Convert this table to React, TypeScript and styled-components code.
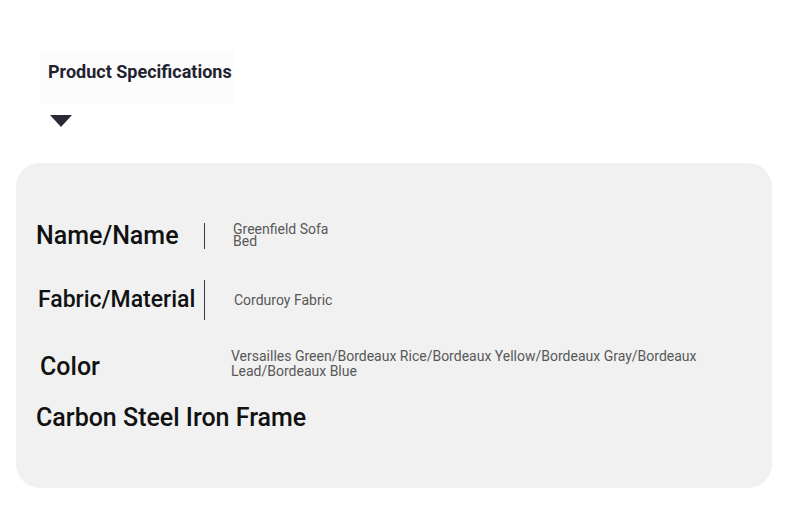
import React from "react";
import styled, { createGlobalStyle } from "styled-components";

const Global = createGlobalStyle`
  html, body { margin: 0; padding: 0; background: #ffffff; }
  body { font-family: Roboto, "Liberation Sans", Arial, sans-serif; }
`;

const Page = styled.div`
  width: 790px;
  padding-top: 50px;
  padding-bottom: 40px;
`;

const Header = styled.div`
  margin-left: 40px;
  width: 186px;
  padding: 8px 0 20px 8px;
  background: #fcfcfd;
`;

const Title = styled.h2`
  margin: 0;
  font-size: 18px;
  line-height: 27px;
  font-weight: 700;
  color: #23232f;
`;

const Caret = styled.div`
  margin: 10px 0 0 50px;
  width: 0;
  height: 0;
  border-left: 11px solid transparent;
  border-right: 11px solid transparent;
  border-top: 12px solid #2a2a36;
`;

const Card = styled.section`
  margin: 36px 18px 0 16px;
  background: #f1f1f1;
  border-radius: 24px;
  padding: 53px 20px 50px 20px;
  display: flex;
  flex-direction: column;
`;

const Row = styled.div<{ $gap: number }>`
  display: flex;
  align-items: center;
  height: 40px;
  margin-top: ${(p) => p.$gap}px;
`;

const LabelCell = styled.div<{ $shift: number; $drop?: number; $wide?: boolean }>`
  box-sizing: border-box;
  width: ${(p) => (p.$wide ? "auto" : "168px")};
  padding-left: ${(p) => p.$shift}px;
  padding-top: ${(p) => p.$drop ?? 0}px;
  flex-shrink: 0;
`;

const Label = styled.span<{ $size: number }>`
  font-size: ${(p) => p.$size}px;
  line-height: 30px;
  font-weight: 500;
  color: #111111;
  white-space: nowrap;
`;

const Divider = styled.div<{ $h: number }>`
  width: 1px;
  height: ${(p) => p.$h}px;
  background: #3a3a3a;
  flex-shrink: 0;
`;

const Value = styled.div<{ $shift: number; $width: number; $lh: number; $lift?: number }>`
  margin-left: ${(p) => p.$shift}px;
  margin-bottom: ${(p) => (p.$lift ?? 0) * 2}px;
  width: ${(p) => p.$width}px;
  font-size: 14px;
  line-height: ${(p) => p.$lh}px;
  color: #585858;
  font-weight: 400;
`;

export default function App() {
  return (
    <>
      <Global />
      <Page>
        <Header>
          <Title>Product Specifications</Title>
        </Header>
        <Caret />
        <Card>
          <Row $gap={0}>
            <LabelCell $shift={0}>
              <Label $size={25}>Name/Name</Label>
            </LabelCell>
            <Divider $h={26} />
            <Value $shift={28} $width={112} $lh={12} $lift={1}>
              Greenfield Sofa Bed
            </Value>
          </Row>
          <Row $gap={24}>
            <LabelCell $shift={2}>
              <Label $size={23}>Fabric/Material</Label>
            </LabelCell>
            <Divider $h={40} />
            <Value $shift={29} $width={200} $lh={15}>
              Corduroy Fabric
            </Value>
          </Row>
          <Row $gap={25}>
            <LabelCell $shift={4} $drop={4}>
              <Label $size={25}>Color</Label>
            </LabelCell>
            <Value $shift={27} $width={530} $lh={15} $lift={1}>
              Versailles Green/Bordeaux Rice/Bordeaux Yellow/Bordeaux Gray/Bordeaux Lead/Bordeaux Blue
            </Value>
          </Row>
          <Row $gap={13}>
            <LabelCell $shift={0} $wide>
              <Label $size={25}>Carbon Steel Iron Frame</Label>
            </LabelCell>
          </Row>
        </Card>
      </Page>
    </>
  );
}
